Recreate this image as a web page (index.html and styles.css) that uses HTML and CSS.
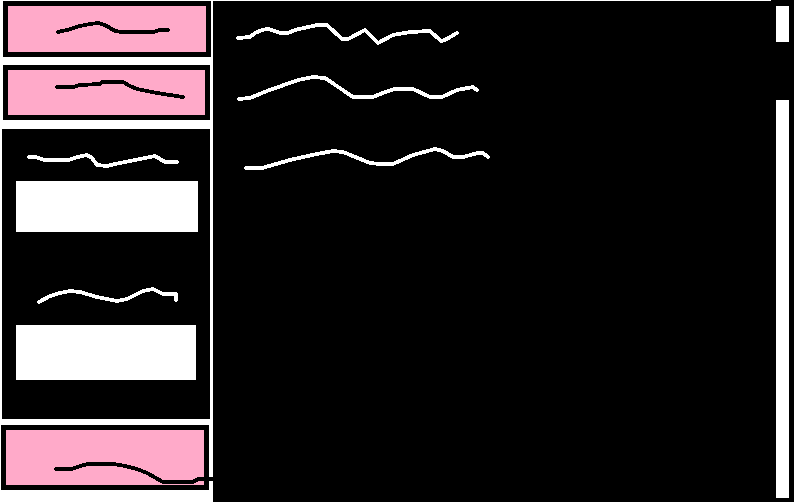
FILE: index.html
```html
<!DOCTYPE html>
<html>
  <head>
    <title>Sketch</title>
    <link rel="stylesheet" href="styles.css">
  </head>
  <body>
    <div class="page">
      <div class="sidebar">
        <div class="card card-first">
          <svg class="scribble-box" viewBox="8 6 198 46">
            <polyline class="ink-dark" points="58,32 67,30 80,26 90,24 98,23 105,25 115,31 122,32 153,32 160,30 168,30"/>
          </svg>
        </div>
        <div class="card card-second">
          <svg class="scribble-box" viewBox="8 70 197 45">
            <polyline class="ink-dark" points="57,87 74,87 80,85 100,84 102,82 123,82 130,86 137,89 157,93 183,97"/>
          </svg>
        </div>
        <div class="panel">
          <svg class="panel-line panel-line-first" viewBox="16 129 182 52">
            <polyline class="ink-light" points="29,157 35,157 45,160 68,160 78,157 87,155 92,158 97,165 107,166 115,164 140,159 155,156 165,162 177,162"/>
          </svg>
          <div class="panel-box panel-box-first"></div>
          <svg class="panel-line panel-line-second" viewBox="16 232 182 93">
            <polyline class="ink-light" points="39,302 50,296 60,293 70,291 80,292 97,297 117,301 127,299 143,291 153,289 163,294 176,294 176,300"/>
          </svg>
          <div class="panel-box panel-box-second"></div>
        </div>
        <div class="card card-third">
          <svg class="scribble-box" viewBox="6 430 198 55">
            <polyline class="ink-dark" points="56,469 72,469 80,466 88,464 113,464 125,466 137,469 147,473 163,482 193,482 198,479 213,479"/>
          </svg>
        </div>
      </div>
      <div class="main">
        <div class="top-edge"></div>
        <div class="main-row">
          <svg class="notes" viewBox="213 1 563 200">
            <polyline class="ink-light" points="238,38 250,37 255,33 262,30 268,29 280,33 288,33 295,30 317,25 327,25 342,39 348,39 365,30 378,43 393,35 410,32 430,31 441,41 445,40 457,33"/>
            <polyline class="ink-light" points="239,99 250,98 267,91 298,80 313,77 325,78 353,97 373,97 385,92 395,89 413,89 430,97 442,97 457,90 473,87 477,90"/>
            <polyline class="ink-light" points="246,168 262,168 290,160 317,154 333,151 343,152 370,163 380,164 393,164 413,155 435,149 443,151 453,157 463,157 478,153 483,153 488,157"/>
          </svg>
          <div class="scrollbar">
            <div class="scroll-top"></div>
            <div class="scroll-track"></div>
          </div>
        </div>
      </div>
    </div>
  </body>
</html>
```

FILE: styles.css
```css
body {
  margin: 0;
  background-color: #fff;
}

.page {
  display: flex;
  width: 794px;
  height: 502px;
  overflow: hidden;
}

.sidebar {
  width: 213px;
  flex-shrink: 0;
}

.card {
  box-sizing: border-box;
  border: 5px solid #000;
  background-color: #ffaac9;
}

.card-first {
  width: 208px;
  height: 56px;
  margin: 1px 0 0 3px;
}

.card-second {
  width: 207px;
  height: 55px;
  margin: 8px 0 0 3px;
}

.card-third {
  width: 208px;
  height: 65px;
  margin: 6px 0 0 1px;
}

.scribble-box {
  display: block;
  width: 100%;
  height: 100%;
  overflow: visible;
}

.panel {
  box-sizing: border-box;
  width: 208px;
  height: 290px;
  margin: 9px 0 0 2px;
  padding-left: 14px;
  background-color: #000;
}

.panel-line {
  display: block;
  width: 182px;
}

.panel-line-first {
  height: 52px;
}

.panel-line-second {
  height: 93px;
}

.panel-box {
  background-color: #fff;
}

.panel-box-first {
  width: 182px;
  height: 51px;
}

.panel-box-second {
  width: 180px;
  height: 55px;
}

.main {
  flex: 1;
  display: flex;
  flex-direction: column;
  background-color: #000;
}

.top-edge {
  height: 1px;
  margin-right: 23px;
  background-color: #fff;
}

.main-row {
  flex: 1;
  display: flex;
  justify-content: space-between;
}

.notes {
  display: block;
  width: 563px;
  height: 200px;
}

.scrollbar {
  display: flex;
  flex-direction: column;
  width: 13px;
  margin-right: 5px;
  padding: 5px 0 4px;
}

.scroll-top {
  height: 36px;
  margin-bottom: 58px;
  background-color: #fff;
}

.scroll-track {
  flex: 1;
  background-color: #fff;
}

.ink-dark,
.ink-light {
  fill: none;
  stroke-width: 3.8;
  stroke-linejoin: round;
  stroke-linecap: round;
  shape-rendering: crispEdges;
}

.ink-dark {
  stroke: #000;
}

.ink-light {
  stroke: #fff;
}
```
